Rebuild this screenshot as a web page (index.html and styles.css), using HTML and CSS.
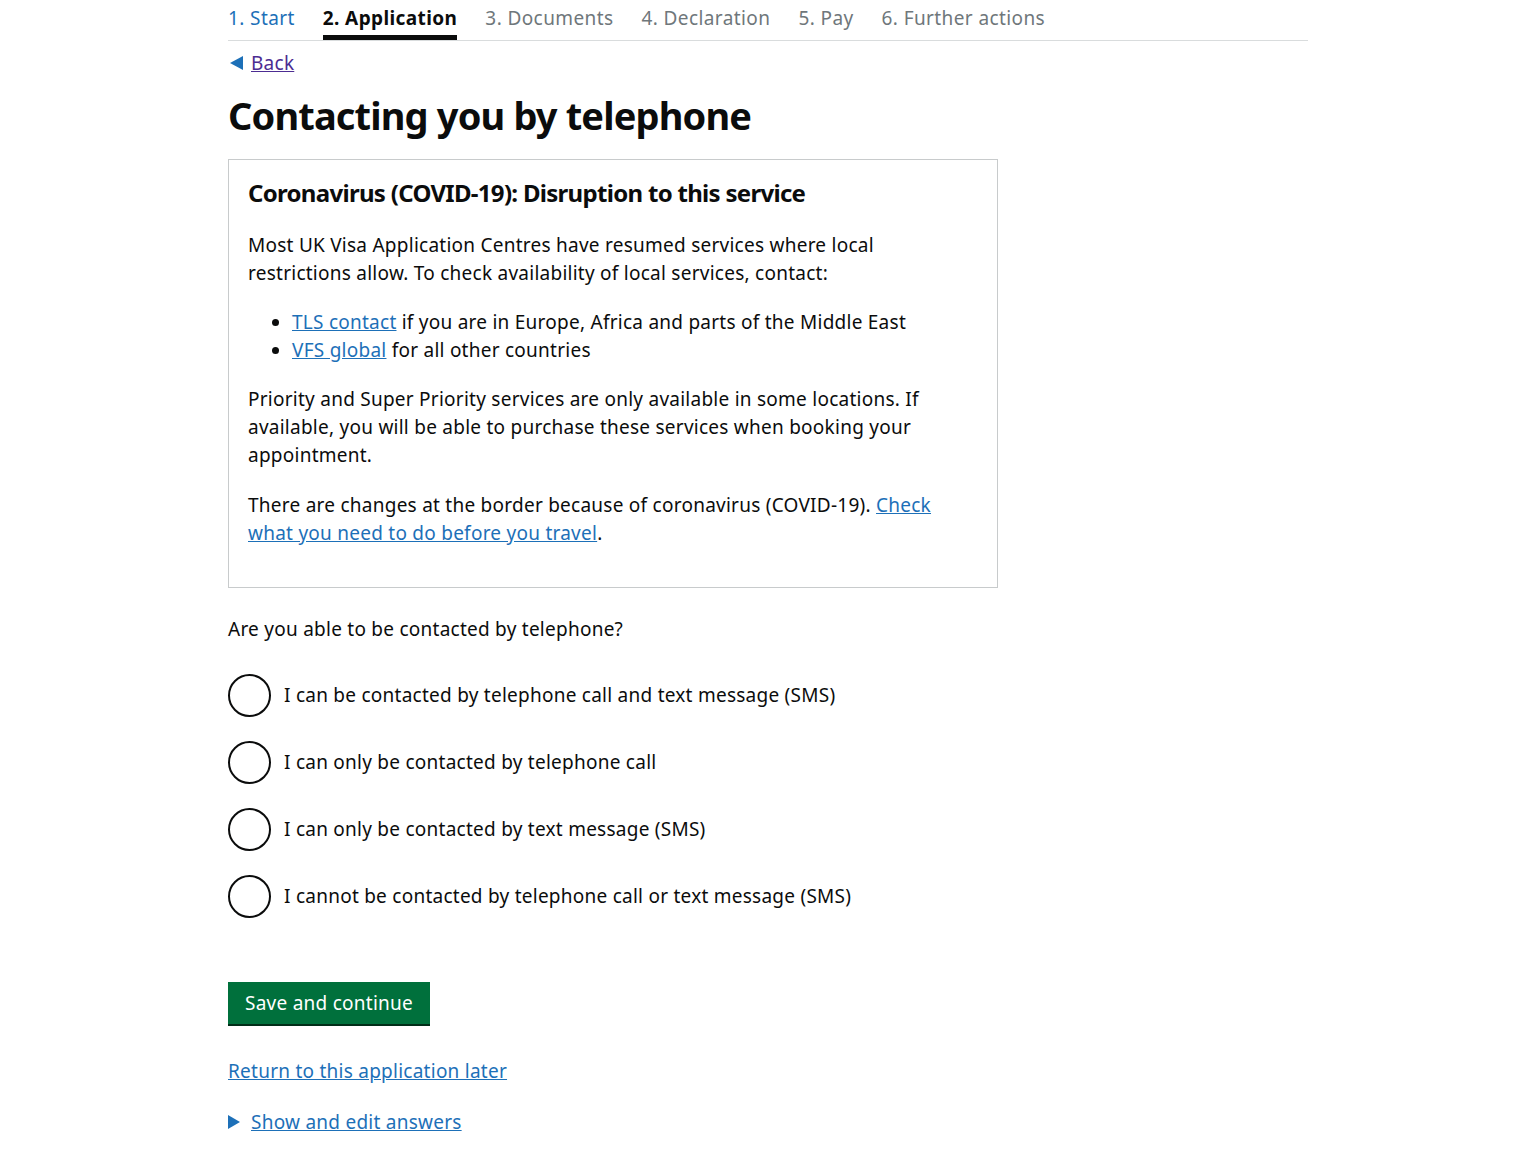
FILE: index.html
```html
<!DOCTYPE html>
<html lang="en">
<head>
<meta charset="utf-8">
<title>Contacting you by telephone</title>
<link rel="stylesheet" href="styles.css">
</head>
<body>
<div class="page">
  <nav class="steps">
    <a class="step step-link" href="#">1. Start</a>
    <span class="step step-current">2. Application</span>
    <span class="step">3. Documents</span>
    <span class="step">4. Declaration</span>
    <span class="step">5. Pay</span>
    <span class="step">6. Further actions</span>
  </nav>
  <a class="back" href="#"><span class="back-arrow"></span><span class="back-text">Back</span></a>
  <h1 class="title">Contacting you by telephone</h1>
  <div class="notice">
    <h2 class="notice-title">Coronavirus (COVID-19): Disruption to this service</h2>
    <p class="body">Most UK Visa Application Centres have resumed services where local restrictions allow. To check availability of local services, contact:</p>
    <ul class="bullets">
      <li><a class="link" href="#">TLS contact</a> if you are in Europe, Africa and parts of the Middle East</li>
      <li><a class="link" href="#">VFS global</a> for all other countries</li>
    </ul>
    <p class="body body-gap">Priority and Super Priority services are only available in some locations. If available, you will be able to purchase these services when booking your appointment.</p>
    <p class="body">There are changes at the border because of coronavirus (COVID-19). <a class="link" href="#">Check what you need to do before you travel</a>.</p>
  </div>
  <fieldset class="question">
    <legend class="legend">Are you able to be contacted by telephone?</legend>
    <div class="radios">
      <label class="radio"><span class="circle"></span><span class="radio-label">I can be contacted by telephone call and text message (SMS)</span></label>
      <label class="radio"><span class="circle"></span><span class="radio-label">I can only be contacted by telephone call</span></label>
      <label class="radio"><span class="circle"></span><span class="radio-label">I can only be contacted by text message (SMS)</span></label>
      <label class="radio"><span class="circle"></span><span class="radio-label">I cannot be contacted by telephone call or text message (SMS)</span></label>
    </div>
  </fieldset>
  <button class="button" type="button">Save and continue</button>
  <div class="later"><a class="link" href="#">Return to this application later</a></div>
  <div class="details"><span class="details-arrow"></span><a class="link" href="#">Show and edit answers</a></div>
</div>
</body>
</html>
```

FILE: styles.css
```css
* { box-sizing: border-box; }
html, body { margin: 0; padding: 0; background: #fff; }
body {
  font-family: "Noto Sans", "Lato", "Liberation Sans", sans-serif;
  color: #0b0c0c;
  font-size: 19px;
  letter-spacing: 0.25px;
}
.page {
  width: 1080px;
  margin-left: 228px;
}
.steps {
  display: flex;
  gap: 28px;
  border-bottom: 1px solid #d9dcdd;
  height: 41px;
  align-items: flex-start;
  padding-top: 5px;
}
.step {
  color: #6f777b;
  font-size: 19px;
  line-height: 26px;
  text-decoration: none;
  height: 35px;
  letter-spacing: 0.4px;
}
.step-link { color: #1d70b8; }
.step-current {
  color: #0b0c0c;
  font-weight: 700;
  border-bottom: 5px solid #0b0c0c;
}
.back {
  display: inline-flex;
  align-items: center;
  margin-top: 9px;
  text-decoration: none;
  height: 26px;
}
.back-arrow {
  width: 0; height: 0;
  border-top: 7px solid transparent;
  border-bottom: 7px solid transparent;
  border-right: 13px solid #1d70b8;
  margin: 0 8px 0 2px;
}
.back-text {
  color: #4c2c92;
  text-decoration: underline;
  font-size: 19px;
}
.title {
  font-size: 38px;
  font-weight: 700;
  line-height: 44px;
  margin: 17px 0 22px;
  letter-spacing: -0.85px;
}
.notice {
  width: 770px;
  border: 1px solid #c8cbcc;
  padding: 17px 37px 40px 19px;
}
.notice-title {
  font-size: 24px;
  font-weight: 700;
  line-height: 32px;
  margin: 0 0 22px;
  letter-spacing: -0.7px;
  white-space: nowrap;
}
.body {
  font-size: 19px;
  line-height: 28px;
  margin: 0 0 21px;
}
.body-gap { margin-bottom: 22px; }
.body:last-child { margin-bottom: 0; }
.bullets {
  margin: 0 0 21px;
  padding-left: 44px;
  font-size: 19px;
  line-height: 28px;
}
.link {
  color: #1d70b8;
  text-decoration: underline;
}
.question {
  border: 0;
  margin: 28px 0 0;
  padding: 0;
}
.legend {
  padding: 0;
  font-size: 19px;
  line-height: 26px;
}
.radios {
  display: flex;
  flex-direction: column;
  gap: 23px;
  margin-top: 31px;
}
.radio {
  display: flex;
  align-items: center;
  gap: 13px;
  height: 44px;
}
.circle {
  width: 43px;
  height: 43px;
  border: 2px solid #0b0c0c;
  border-radius: 50%;
  flex: none;
}
.radio-label {
  font-size: 19px;
  line-height: 26px;
}
.button {
  display: block;
  margin-top: 64px;
  background: #00703c;
  color: #fff;
  border: 0;
  box-shadow: 0 2px 0 #002d18;
  font-family: inherit;
  font-size: 19px;
  letter-spacing: 0.25px;
  line-height: 24px;
  padding: 9px 10px;
  width: 202px;
  text-align: center;
  height: 42px;
}
.later {
  margin-top: 34px;
  font-size: 19px;
  line-height: 26px;
}
.details {
  margin-top: 25px;
  display: flex;
  align-items: center;
  font-size: 19px;
  line-height: 26px;
}
.details-arrow {
  width: 0; height: 0;
  border-top: 7px solid transparent;
  border-bottom: 7px solid transparent;
  border-left: 12px solid #1d70b8;
  margin-right: 11px;
}
```
